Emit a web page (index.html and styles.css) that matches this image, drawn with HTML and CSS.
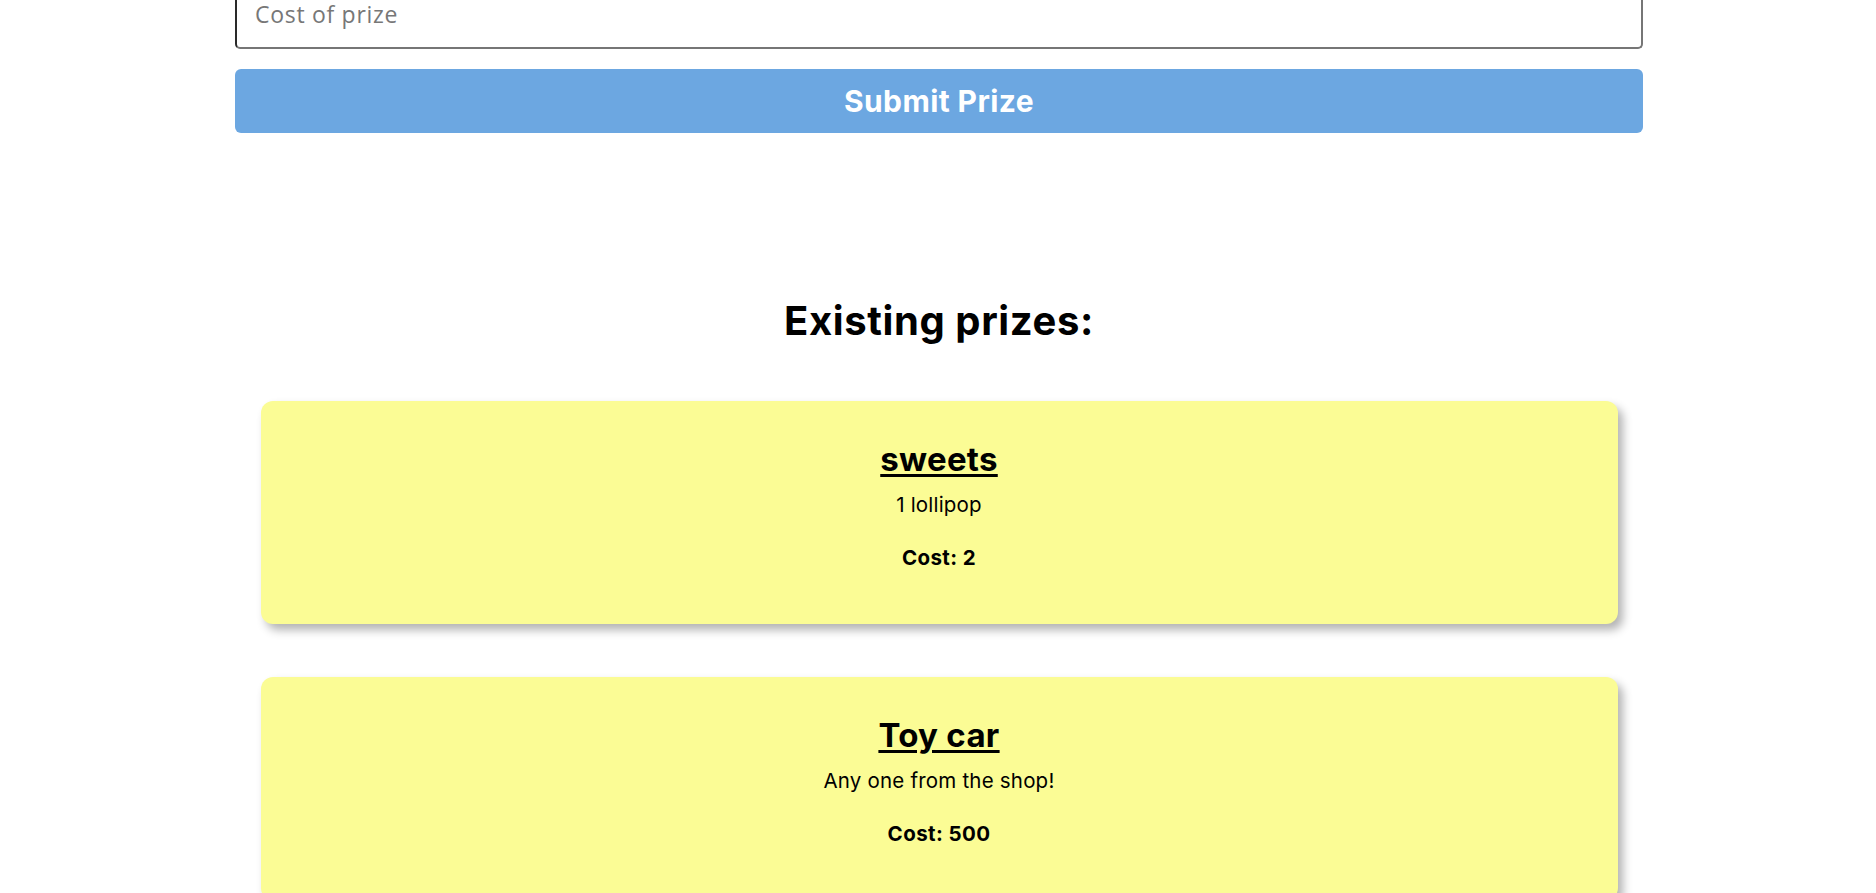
FILE: index.html
```html
<!DOCTYPE html>
<html lang="en">
<head>
<meta charset="utf-8">
<title>Prizes</title>
<link rel="stylesheet" href="styles.css">
</head>
<body>
<main class="page">
  <form class="prize-form">
    <input class="field" type="text" placeholder="Cost of prize">
    <button class="submit" type="button">Submit Prize</button>
  </form>
  <section class="prizes">
    <h1 class="prizes-title">Existing prizes:</h1>
    <div class="card">
      <h2 class="card-title">sweets</h2>
      <p class="card-desc">1 lollipop</p>
      <p class="card-cost">Cost: 2</p>
    </div>
    <div class="card">
      <h2 class="card-title">Toy car</h2>
      <p class="card-desc">Any one from the shop!</p>
      <p class="card-cost">Cost: 500</p>
    </div>
  </section>
</main>
</body>
</html>
```
FILE: styles.css
```css
html, body {
  margin: 0;
  padding: 0;
  background: #ffffff;
  overflow: hidden;
}
body {
  font-family: Inter, "Liberation Sans", sans-serif;
  color: #000;
}
.page {
  width: 1408px;
  margin: 0 auto;
  padding-left: 2px;
}
.prize-form {
  display: flex;
  flex-direction: column;
  gap: 20px;
  margin-top: -15px;
}
.field {
  box-sizing: border-box;
  height: 64px;
  width: 100%;
  margin: 0;
  padding: 0 18px 6px;
  border: 2px solid #767676;
  border-left-color: #2a2a2a;
  border-top-color: #2a2a2a;
  border-radius: 5px;
  font-family: "Open Sans", sans-serif;
  font-size: 23px;
  letter-spacing: 0.7px;
  background: #fff;
}
.field::placeholder {
  color: #777;
}
.submit {
  height: 64px;
  width: 100%;
  border: none;
  border-radius: 6px;
  background: #6ca7e1;
  color: #fff;
  font-family: Inter, sans-serif;
  font-weight: 700;
  font-size: 30px;
  letter-spacing: 0.4px;
  padding: 0;
}
.prizes {
  padding-top: 164px;
  display: flex;
  flex-direction: column;
  align-items: center;
}
.prizes-title {
  margin: 0 0 56px;
  font-size: 40px;
  font-weight: 700;
  letter-spacing: 0.6px;
  line-height: 48px;
}
.card {
  box-sizing: border-box;
  width: 1357px;
  height: 223px;
  margin-bottom: 53px;
  padding-top: 38px;
  background: #fbfc95;
  border-radius: 12px;
  box-shadow: 5px 6px 10px rgba(0, 0, 0, 0.3);
  text-align: center;
}
.card-title {
  margin: 0;
  font-size: 33px;
  font-weight: 700;
  letter-spacing: 0.3px;
  line-height: 40px;
  text-decoration: underline;
  text-decoration-thickness: 3px;
  text-underline-offset: 3px;
}
.card-desc {
  margin: 14px 0 0;
  font-size: 20.5px;
  letter-spacing: 0.2px;
  line-height: 24px;
}
.card-cost {
  margin: 29px 0 0;
  font-size: 20.5px;
  font-weight: 700;
  letter-spacing: 0.4px;
  line-height: 24px;
}
```
